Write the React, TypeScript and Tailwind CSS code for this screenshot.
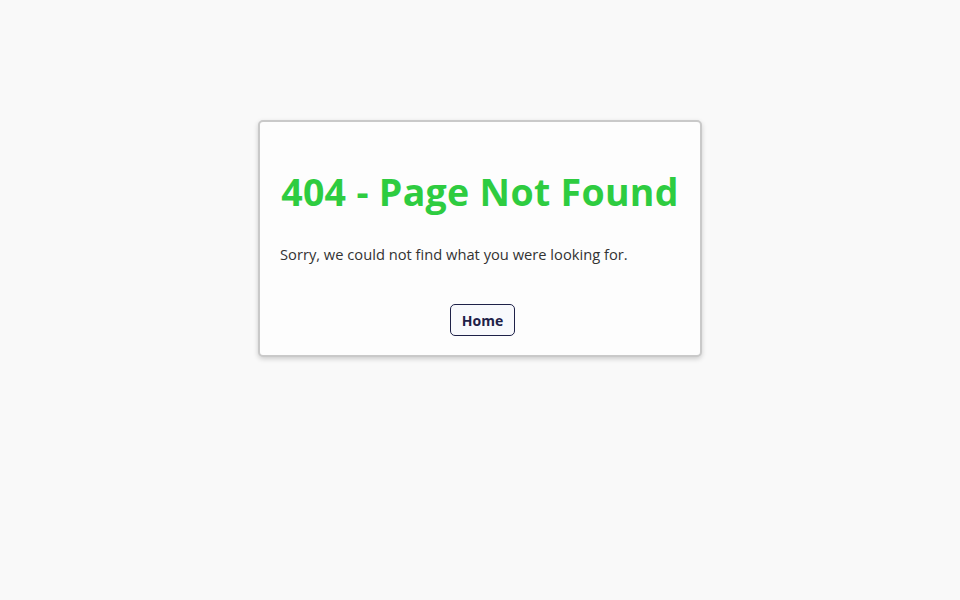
export default function App() {
  return (
    <div
      className="min-h-screen w-full bg-[#f9f9f9] pt-[120px]"
      style={{ fontFamily: '"Open Sans", "Noto Sans", sans-serif' }}
    >
      <div className="mx-auto w-[444px] rounded-[5px] border-2 border-[#c9c9c9] bg-[#fdfdfd] px-[20px] pb-[19px] pt-[44px] shadow-[0_2px_5px_rgba(0,0,0,0.18)]">
        <h1 className="-mx-[10px] whitespace-nowrap text-center text-[37.5px] font-bold leading-[52px] tracking-[0.3px] text-[#2ecc40]">
          404 - Page Not Found
        </h1>
        <p className="mt-[26px] text-[14.7px] leading-[20px] text-[#333333]">
          Sorry, we could not find what you were looking for.
        </p>
        <div className="mt-[40px] flex justify-center pl-[5px]">
          <button className="h-[32px] rounded-[5px] border border-[#1e2148] bg-[#f8f9fc] px-[11px] text-[14px] font-bold text-[#1e2148]">
            Home
          </button>
        </div>
      </div>
    </div>
  );
}
